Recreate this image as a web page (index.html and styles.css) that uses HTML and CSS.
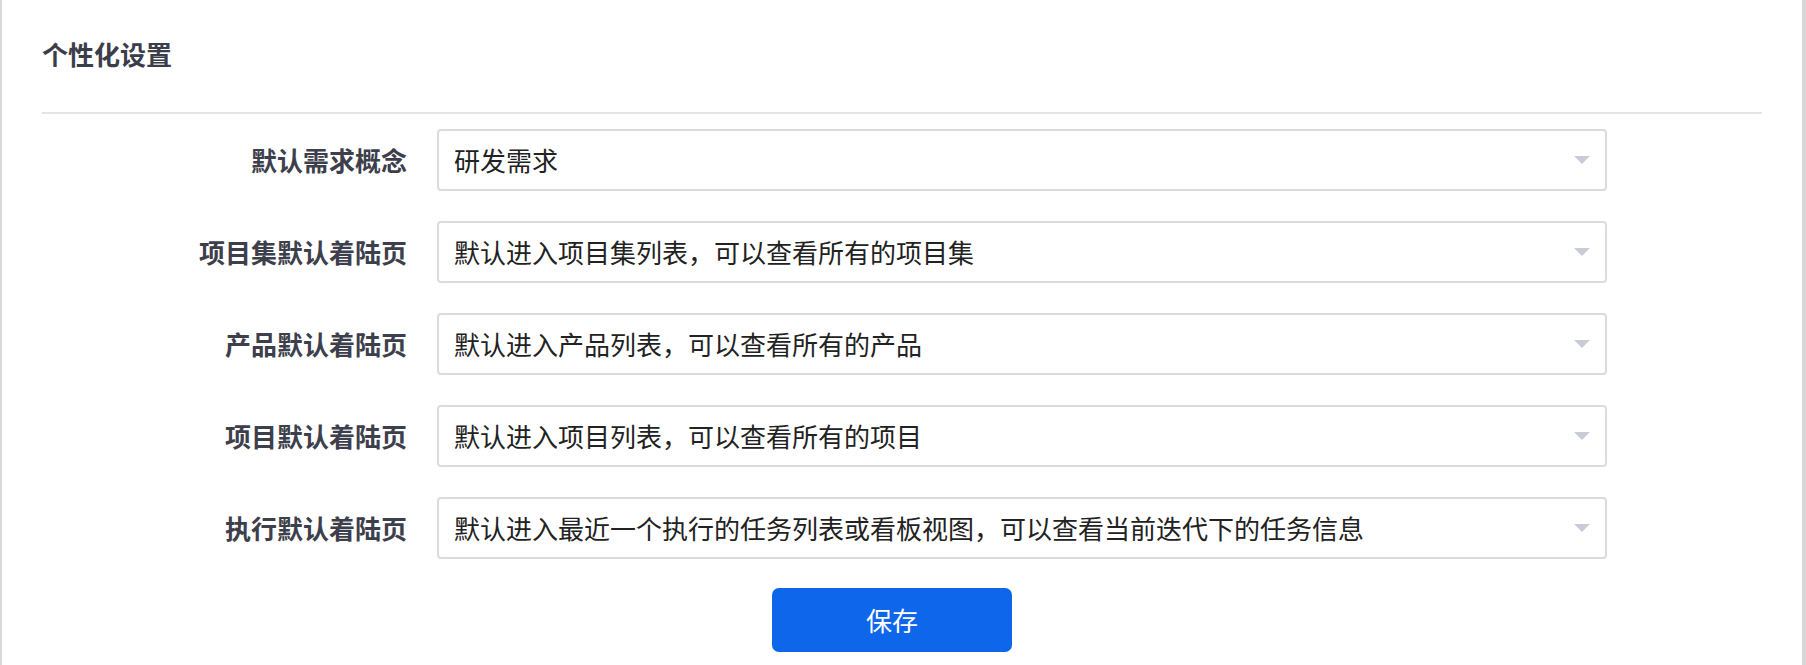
FILE: index.html
```html
<!DOCTYPE html>
<html lang="zh-CN">
<head>
<meta charset="utf-8">
<title>个性化设置</title>
<link rel="stylesheet" href="styles.css">
</head>
<body>
<div class="frame">
  <div class="panel">
    <div class="header"><h2 class="title">个性化设置</h2></div>
    <div class="form">
      <div class="row">
        <label class="label">默认需求概念</label>
        <div class="select"><span class="value">研发需求</span><span class="arrow"></span></div>
      </div>
      <div class="row">
        <label class="label">项目集默认着陆页</label>
        <div class="select"><span class="value">默认进入项目集列表，可以查看所有的项目集</span><span class="arrow"></span></div>
      </div>
      <div class="row">
        <label class="label">产品默认着陆页</label>
        <div class="select"><span class="value">默认进入产品列表，可以查看所有的产品</span><span class="arrow"></span></div>
      </div>
      <div class="row">
        <label class="label">项目默认着陆页</label>
        <div class="select"><span class="value">默认进入项目列表，可以查看所有的项目</span><span class="arrow"></span></div>
      </div>
      <div class="row">
        <label class="label">执行默认着陆页</label>
        <div class="select"><span class="value">默认进入最近一个执行的任务列表或看板视图，可以查看当前迭代下的任务信息</span><span class="arrow"></span></div>
      </div>
      <div class="actions"><button class="btn-save" type="button">保存</button></div>
    </div>
  </div>
</div>
</body>
</html>
```
FILE: styles.css
```css
html, body {
  margin: 0;
  padding: 0;
  background: #ffffff;
}
body {
  font-family: "Noto Sans CJK SC", "Noto Sans", "Liberation Sans", sans-serif;
}
.frame {
  box-sizing: border-box;
  height: 665px;
  border-left: 2px solid #d9d9d9;
  border-right: 4px solid #d6d6d6;
  overflow: hidden;
}
.panel {
  padding: 0 40px;
}
.header {
  height: 112px;
  border-bottom: 2px solid #e4e4e4;
  display: flex;
  align-items: center;
}
.title {
  margin: 0;
  font-size: 26px;
  font-weight: 700;
  color: #3c3d4a;
  line-height: 1;
  transform: translateY(-2px);
}
.form {
  padding-top: 15px;
  display: flex;
  flex-direction: column;
  gap: 30px;
}
.row {
  display: grid;
  grid-template-columns: 365px 1170px;
  column-gap: 30px;
  align-items: center;
}
.label {
  text-align: right;
  font-size: 26px;
  font-weight: 700;
  color: #3e3f4c;
  line-height: 1;
}
.select {
  box-sizing: border-box;
  height: 62px;
  border: 2px solid #dcdcdc;
  border-radius: 4px;
  padding: 0 15px 0 15px;
  display: flex;
  align-items: center;
  justify-content: space-between;
  background: #fff;
}
.value {
  font-size: 26px;
  color: #222222;
  line-height: 1;
  white-space: nowrap;
}
.arrow {
  width: 0;
  height: 0;
  border-left: 8px solid transparent;
  border-right: 8px solid transparent;
  border-top: 8px solid #c9ccd8;
}
.actions {
  display: flex;
  justify-content: center;
  width: 1720px;
  padding-right: 20px;
  box-sizing: border-box;
  margin-top: -1px;
}
.btn-save {
  width: 240px;
  height: 64px;
  border: none;
  border-radius: 7px;
  background: #0e66eb;
  color: #ffffff;
  font-family: "Noto Sans CJK SC", "Noto Sans", sans-serif;
  font-size: 26px;
  line-height: 1;
  cursor: pointer;
}
```
